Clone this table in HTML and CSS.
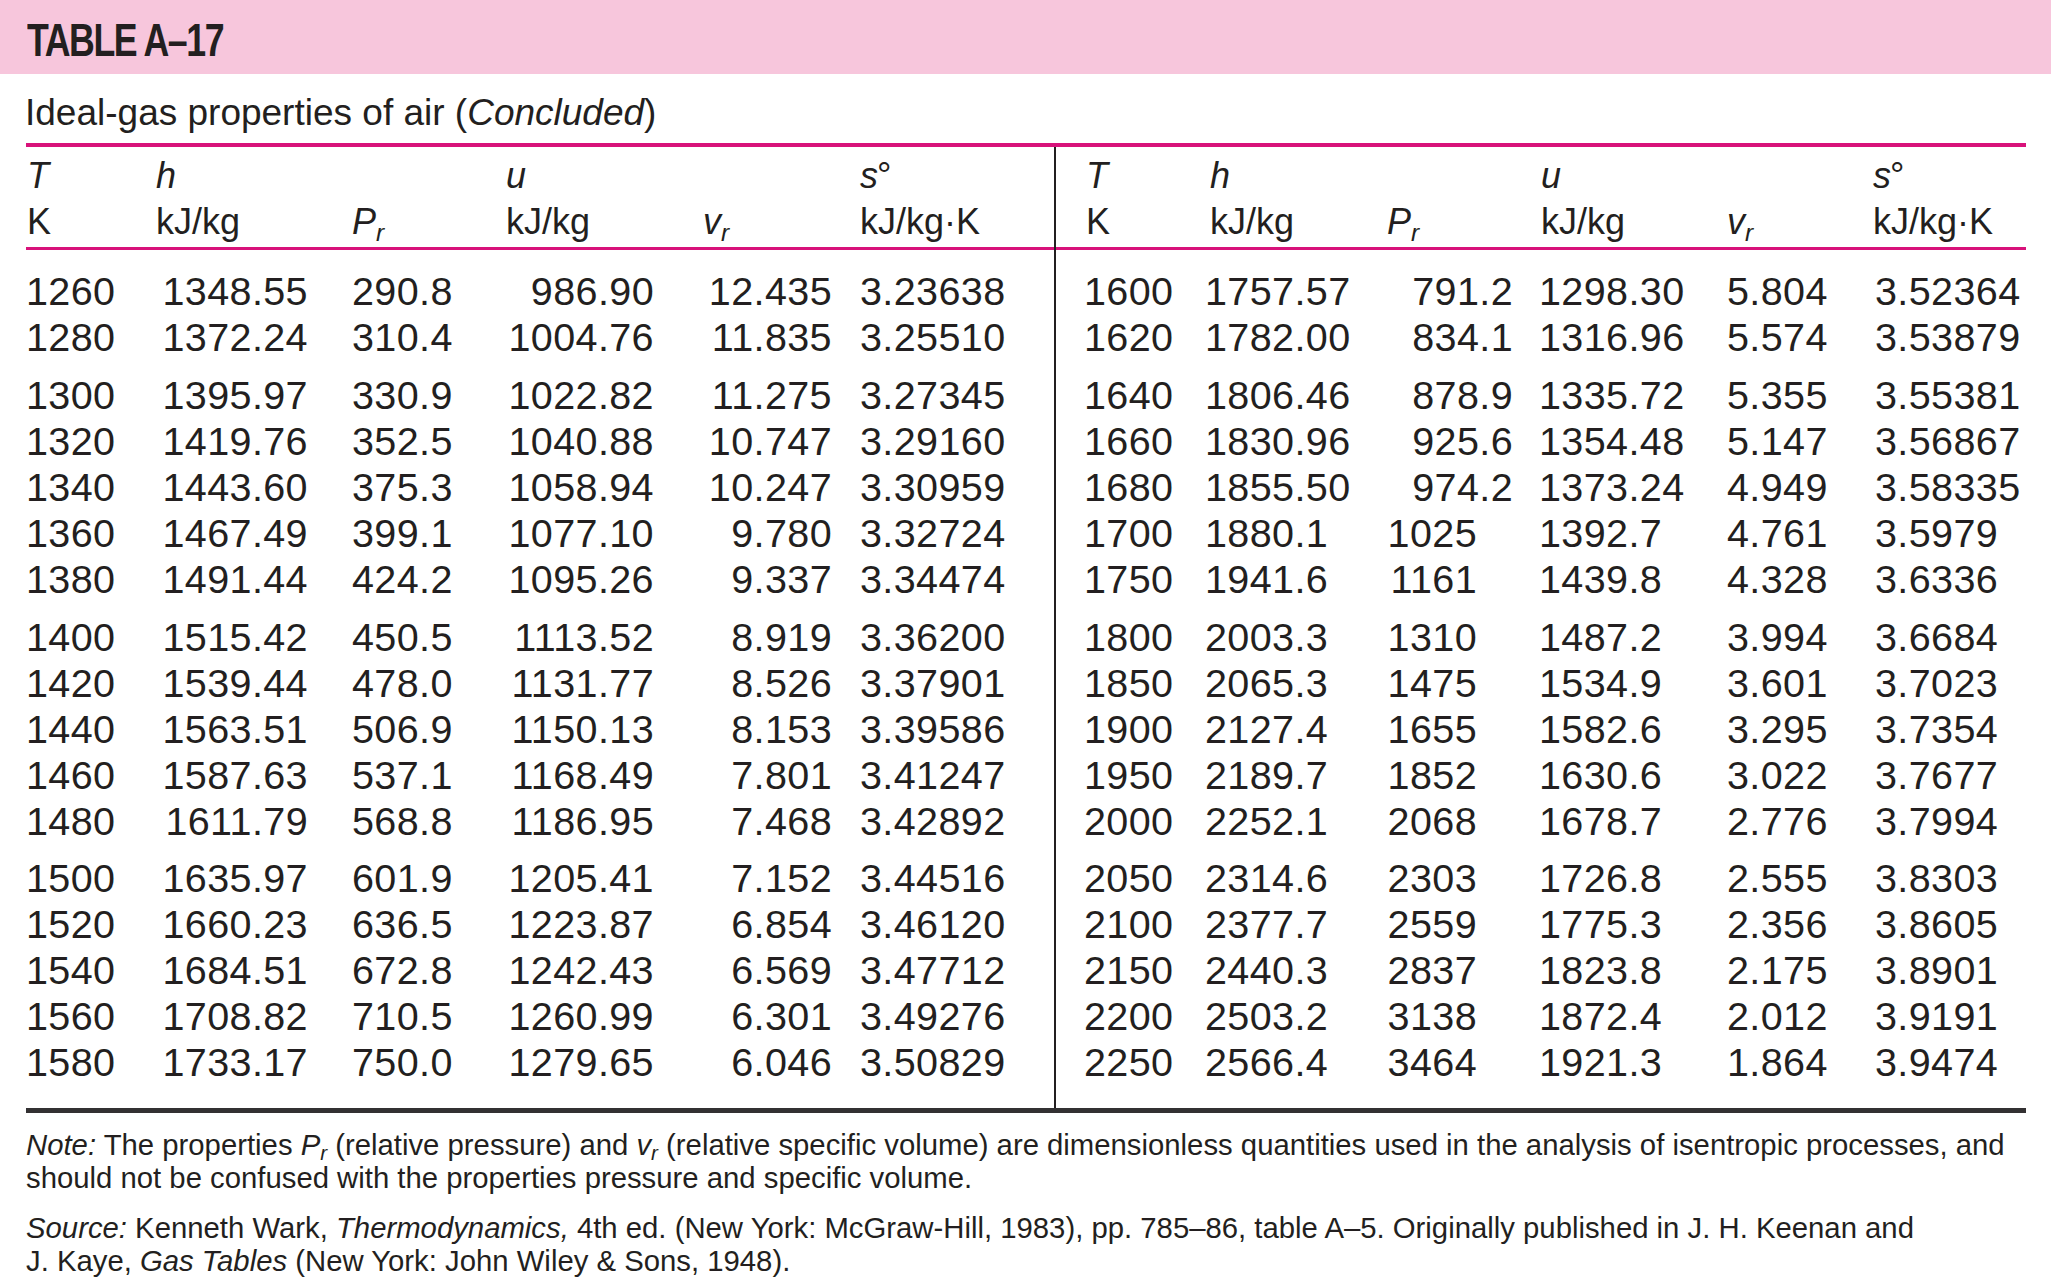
FILE: index.html
```html
<!DOCTYPE html>
<html lang="en">
<head>
<meta charset="utf-8">
<title>Table A-17</title>
<link rel="stylesheet" href="styles.css">
</head>
<body>
<header class="band"><h1 class="title">TABLE A–17</h1></header>
<p class="subtitle">Ideal-gas properties of air (<i>Concluded</i>)</p>
<div class="table">
  <section class="half left">
    <div class="grid head">
      <span><i>T</i></span><span><i>h</i></span><span></span><span><i>u</i></span><span></span><span><i>s</i><sup>°</sup></span>
      <span>K</span><span>kJ/kg</span><span><i>P</i><sub><i>r</i></sub></span><span>kJ/kg</span><span><i>v</i><sub><i>r</i></sub></span><span>kJ/kg·K</span>
    </div>
    <div class="body">
      <div class="grid grp">
        <span>1260</span><span>1348.55</span><span>290.8</span><span>986.90</span><span>12.435</span><span>3.23638</span>
        <span>1280</span><span>1372.24</span><span>310.4</span><span>1004.76</span><span>11.835</span><span>3.25510</span>
      </div>
      <div class="grid grp">
        <span>1300</span><span>1395.97</span><span>330.9</span><span>1022.82</span><span>11.275</span><span>3.27345</span>
        <span>1320</span><span>1419.76</span><span>352.5</span><span>1040.88</span><span>10.747</span><span>3.29160</span>
        <span>1340</span><span>1443.60</span><span>375.3</span><span>1058.94</span><span>10.247</span><span>3.30959</span>
        <span>1360</span><span>1467.49</span><span>399.1</span><span>1077.10</span><span>9.780</span><span>3.32724</span>
        <span>1380</span><span>1491.44</span><span>424.2</span><span>1095.26</span><span>9.337</span><span>3.34474</span>
      </div>
      <div class="grid grp">
        <span>1400</span><span>1515.42</span><span>450.5</span><span>1113.52</span><span>8.919</span><span>3.36200</span>
        <span>1420</span><span>1539.44</span><span>478.0</span><span>1131.77</span><span>8.526</span><span>3.37901</span>
        <span>1440</span><span>1563.51</span><span>506.9</span><span>1150.13</span><span>8.153</span><span>3.39586</span>
        <span>1460</span><span>1587.63</span><span>537.1</span><span>1168.49</span><span>7.801</span><span>3.41247</span>
        <span>1480</span><span>1611.79</span><span>568.8</span><span>1186.95</span><span>7.468</span><span>3.42892</span>
      </div>
      <div class="grid grp">
        <span>1500</span><span>1635.97</span><span>601.9</span><span>1205.41</span><span>7.152</span><span>3.44516</span>
        <span>1520</span><span>1660.23</span><span>636.5</span><span>1223.87</span><span>6.854</span><span>3.46120</span>
        <span>1540</span><span>1684.51</span><span>672.8</span><span>1242.43</span><span>6.569</span><span>3.47712</span>
        <span>1560</span><span>1708.82</span><span>710.5</span><span>1260.99</span><span>6.301</span><span>3.49276</span>
        <span>1580</span><span>1733.17</span><span>750.0</span><span>1279.65</span><span>6.046</span><span>3.50829</span>
      </div>
    </div>
  </section>
  <section class="half right">
    <div class="grid head">
      <span><i>T</i></span><span><i>h</i></span><span></span><span><i>u</i></span><span></span><span><i>s</i><sup>°</sup></span>
      <span>K</span><span>kJ/kg</span><span><i>P</i><sub><i>r</i></sub></span><span>kJ/kg</span><span><i>v</i><sub><i>r</i></sub></span><span>kJ/kg·K</span>
    </div>
    <div class="body">
      <div class="grid grp">
        <span>1600</span><span>1757.57</span><span>791.2</span><span>1298.30</span><span>5.804</span><span>3.52364</span>
        <span>1620</span><span>1782.00</span><span>834.1</span><span>1316.96</span><span>5.574</span><span>3.53879</span>
      </div>
      <div class="grid grp">
        <span>1640</span><span>1806.46</span><span>878.9</span><span>1335.72</span><span>5.355</span><span>3.55381</span>
        <span>1660</span><span>1830.96</span><span>925.6</span><span>1354.48</span><span>5.147</span><span>3.56867</span>
        <span>1680</span><span>1855.50</span><span>974.2</span><span>1373.24</span><span>4.949</span><span>3.58335</span>
        <span>1700</span><span>1880.1</span><span class="int">1025</span><span>1392.7</span><span>4.761</span><span>3.5979</span>
        <span>1750</span><span>1941.6</span><span class="int">1161</span><span>1439.8</span><span>4.328</span><span>3.6336</span>
      </div>
      <div class="grid grp">
        <span>1800</span><span>2003.3</span><span class="int">1310</span><span>1487.2</span><span>3.994</span><span>3.6684</span>
        <span>1850</span><span>2065.3</span><span class="int">1475</span><span>1534.9</span><span>3.601</span><span>3.7023</span>
        <span>1900</span><span>2127.4</span><span class="int">1655</span><span>1582.6</span><span>3.295</span><span>3.7354</span>
        <span>1950</span><span>2189.7</span><span class="int">1852</span><span>1630.6</span><span>3.022</span><span>3.7677</span>
        <span>2000</span><span>2252.1</span><span class="int">2068</span><span>1678.7</span><span>2.776</span><span>3.7994</span>
      </div>
      <div class="grid grp">
        <span>2050</span><span>2314.6</span><span class="int">2303</span><span>1726.8</span><span>2.555</span><span>3.8303</span>
        <span>2100</span><span>2377.7</span><span class="int">2559</span><span>1775.3</span><span>2.356</span><span>3.8605</span>
        <span>2150</span><span>2440.3</span><span class="int">2837</span><span>1823.8</span><span>2.175</span><span>3.8901</span>
        <span>2200</span><span>2503.2</span><span class="int">3138</span><span>1872.4</span><span>2.012</span><span>3.9191</span>
        <span>2250</span><span>2566.4</span><span class="int">3464</span><span>1921.3</span><span>1.864</span><span>3.9474</span>
      </div>
    </div>
  </section>
</div>
<footer class="notes">
  <p><i>Note:</i> The properties <i>P</i><sub><i>r</i></sub> (relative pressure) and <i>v</i><sub><i>r</i></sub> (relative specific volume) are dimensionless quantities used in the analysis of isentropic processes, and<br>should not be confused with the properties pressure and specific volume.</p>
  <p class="source"><i>Source:</i> Kenneth Wark, <i>Thermodynamics,</i> 4th ed. (New York: McGraw-Hill, 1983), pp. 785–86, table A–5. Originally published in J. H. Keenan and<br>J. Kaye, <i>Gas Tables</i> (New York: John Wiley &amp; Sons, 1948).</p>
</footer>
</body>
</html>
```
FILE: styles.css
```css
* { box-sizing: border-box; }
html, body { margin: 0; padding: 0; background: #fff; }
body {
  font-family: "Liberation Sans", Arial, sans-serif;
  color: #231f20;
  width: 2051px;
  height: 1278px;
  overflow: hidden;
}
.band {
  height: 74px;
  background: #f7c6dc;
  padding: 6px 0 0 27px;
}
.title {
  margin: 0;
  display: inline-block;
  font-family: "Liberation Sans Narrow", "Liberation Sans", sans-serif;
  font-weight: 700;
  font-size: 47px;
  line-height: 68px;
  letter-spacing: -0.04em;
  transform: scaleX(0.76);
  transform-origin: 0 50%;
}
.subtitle {
  margin: 0;
  height: 64px;
  padding: 14px 0 0 25px;
  font-size: 37px;
  line-height: 50px;
}
.table {
  display: flex;
  margin: 5px 25px 0 26px;
  border-top: 4px solid #d8127a;
  border-bottom: 5px solid #333132;
}
.half.left { width: 1028px; }
.half.right { width: 972px; border-left: 2px solid #231f20; }
.grid { display: grid; }
.left .grid { grid-template-columns: 130px 152px 198px 148px 178px 222px; }
.right .grid { grid-template-columns: 149px 175px 133px 187px 170px 156px; }
.grid > span { white-space: nowrap; }

.head {
  padding: 5.5px 0 2.5px;
  border-bottom: 3px solid #d8127a;
  font-size: 36px;
  line-height: 46px;
}
.body {
  padding: 18.3px 0 22.6px;
  font-size: 39.5px;
  line-height: 46px;
  letter-spacing: 0.01em;
}
.grp + .grp { margin-top: 11.7px; }

sub, sup { line-height: 0; font-size: 0.68em; }
sub { vertical-align: -0.28em; }
sup { vertical-align: -0.02em; font-size: 1em; margin-left: -0.03em; }

/* left half alignment */
.left .head > :nth-child(6n+1) { padding-left: 1px; }
.left .head > :nth-child(6n+3) { padding-left: 44px; }
.left .head > :nth-child(6n+5) { padding-left: 49px; }
.left .head > :nth-child(6n+6) { padding-left: 28px; }
.left .grp > :nth-child(6n+2),
.left .grp > :nth-child(6n+4),
.left .grp > :nth-child(6n+5) { text-align: right; }
.left .grp > :nth-child(6n+3) { padding-left: 44px; }
.left .grp > :nth-child(6n+6) { padding-left: 28px; }

/* right half alignment */
.right .head > :nth-child(6n+1) { padding-left: 30px; }
.right .head > :nth-child(6n+2) { padding-left: 5px; }
.right .head > :nth-child(6n+3) { padding-left: 7px; }
.right .head > :nth-child(6n+4) { padding-left: 28px; }
.right .head > :nth-child(6n+5) { padding-left: 27px; }
.right .head > :nth-child(6n+6) { padding-left: 3px; }
.right .grp > :nth-child(6n+1) { padding-left: 28px; }
.right .grp > :nth-child(6n+3) { text-align: right; }
.right .grp > :nth-child(6n+3).int { padding-right: 36px; }
.right .grp > :nth-child(6n+4) { padding-left: 26px; }
.right .grp > :nth-child(6n+5) { padding-left: 27px; }
.right .grp > :nth-child(6n+6) { padding-left: 5px; }

.notes {
  padding: 15.5px 0 0 26px;
  font-size: 29.3px;
  line-height: 33px;
  white-space: nowrap;
}
.notes p { margin: 0; }
.notes .source { margin-top: 17px; }
.notes sub { font-size: 0.7em; vertical-align: -0.25em; }
```
